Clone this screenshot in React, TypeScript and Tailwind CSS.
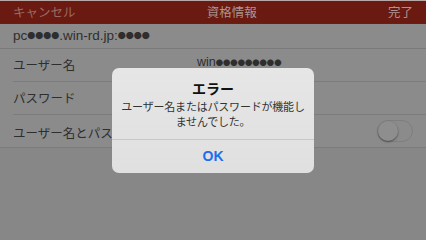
import React from "react";

function Dots({ n, pitch }: { n: number; pitch: string }) {
  return (
    <span className={`${pitch} align-[1px]`} style={{ fontFamily: '"Noto Sans CJK JP", sans-serif' }}>
      {"●".repeat(n)}
    </span>
  );
}

export default function App() {
  const font = { fontFamily: '"Noto Sans CJK JP", "Noto Sans", sans-serif' };
  const latin = { fontFamily: '"Liberation Sans", "Noto Sans CJK JP", sans-serif' };
  return (
    <div className="relative w-[426px] h-[240px] overflow-hidden bg-[#878787]" style={font}>
      <div className="h-[1px] bg-[#b9a8a5]" />
      <div className="flex items-center justify-between h-[23px] bg-[#6a1a11] px-[13px] border-b border-[#5a2520]">
        <span className="text-[12.5px] text-[#9b6a63] leading-none">キャンセル</span>
        <span className="text-[12.5px] text-[#ab9490] leading-none">資格情報</span>
        <span className="text-[12.5px] text-[#ab9490] leading-none">完了</span>
      </div>
      <div className="flex items-center h-[25px] bg-[#8b8b8b] px-[13px] border-b border-[#7a7a7a]">
        <span className="text-[13.5px] text-[#2e2e2e] leading-none" style={latin}>
          pc<Dots n={4} pitch="text-[8px]" />.win-rd.jp:<Dots n={4} pitch="text-[8px]" />
        </span>
      </div>
      <div className="bg-[#8b8b8b]">
        <div className="pl-[13px]">
          <div className="flex items-center h-[33px] border-b border-[#7c7c7c]">
            <span className="text-[12.5px] text-[#2e2e2e] w-[184px]">ユーザー名</span>
            <span className="text-[12.5px] text-[#2e2e2e] -mt-[6px]" style={latin}>
              win<Dots n={9} pitch="text-[7.3px]" />
            </span>
          </div>
          <div className="flex items-center h-[33px] border-b border-[#7c7c7c]">
            <span className="text-[12.5px] text-[#2e2e2e]">パスワード</span>
          </div>
        </div>
        <div className="flex items-center h-[33px] pl-[13px] pr-[13px] border-b border-[#7c7c7c]">
          <div className="flex-1">
            <div className="w-[99px] overflow-hidden whitespace-nowrap">
              <span className="text-[12.5px] text-[#2e2e2e]">ユーザー名とパス</span>
            </div>
          </div>
          <div className="relative w-[36px] h-[22px] rounded-full border border-[#7e7e7e] bg-[#8b8b8b]">
            <div className="absolute left-0 top-0 w-[20px] h-[20px] rounded-full bg-[#8e8e8e] shadow-[0_1px_2px_rgba(0,0,0,0.45)]" />
          </div>
        </div>
      </div>

      <div className="absolute left-[112px] top-[68px] w-[202px] h-[105px] rounded-[7px] bg-gradient-to-b from-[#e6e6e6] to-[#e0e0e0] flex flex-col">
        <div className="flex flex-col items-center pt-[11px] h-[72px] border-b border-[#c8c8c8]">
          <span className="text-[14px] font-bold text-[#111] leading-[18px]">エラー</span>
          <span className="text-[11px] tracking-[-0.2px] text-[#333] leading-[15px] text-center mt-[2px]">
            ユーザー名またはパスワードが機能し<br />ませんでした。
          </span>
        </div>
        <div className="flex-1 flex items-center justify-center">
          <span className="text-[14px] font-bold text-[#1b6ff0]" style={latin}>OK</span>
        </div>
      </div>
    </div>
  );
}
